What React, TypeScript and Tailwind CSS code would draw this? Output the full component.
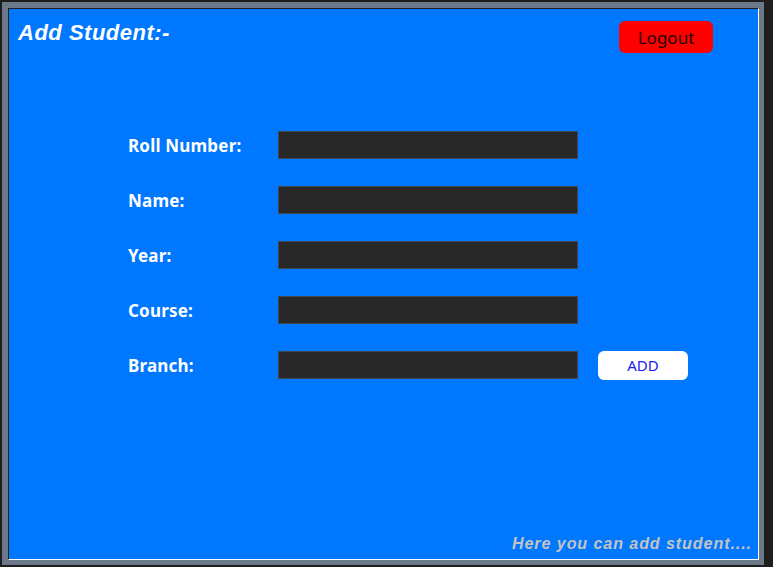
const fields = ["Roll Number:", "Name:", "Year:", "Course:", "Branch:"];

export default function App() {
  return (
    <div className="w-[773px] h-[567px] bg-[#1e1e1e] p-[2px]">
      <div className="w-[762px] h-[563px] bg-[#6b7989] pl-[6px] pt-[6px] pr-[5px] pb-[5px]">
        <div className="flex h-full flex-col border-t border-l border-t-[#202020] border-l-[#202020] border-r border-b border-r-white border-b-white bg-[#0077ff]">
          <div className="flex items-start justify-between">
            <h1
              className="ml-[9px] mt-[11px] text-[22px] leading-[26px] font-bold italic tracking-[0.5px] text-white"
              style={{ fontFamily: '"Liberation Sans", Arial, sans-serif' }}
            >
              Add Student:-
            </h1>
            <button
              className="mr-[45px] mt-[12px] h-[32px] w-[94px] rounded-[6px] bg-[#ff0000] pt-[1px] text-[17px] text-[#1a0000]"
              style={{ fontFamily: '"Noto Sans", sans-serif' }}
            >
              Logout
            </button>
          </div>

          <div className="mt-[78px] ml-[119px] flex flex-col gap-[27px]">
            {fields.map((label, i) => (
              <div key={label} className="flex h-[28px] items-center">
                <span
                  className="w-[150px] pt-[2px] text-[17px] font-bold tracking-[0.2px] text-white"
                  style={{ fontFamily: '"Noto Sans", sans-serif' }}
                >
                  {label}
                </span>
                <input
                  type="text"
                  className="h-[28px] w-[300px] border border-[#3e4650] bg-[#282828] outline-none"
                />
                {i === fields.length - 1 && (
                  <button
                    className="ml-[20px] h-[29px] w-[90px] rounded-[6px] bg-white text-[15px] text-[#2020ee]"
                    style={{ fontFamily: '"Noto Sans", sans-serif' }}
                  >
                    ADD
                  </button>
                )}
              </div>
            ))}
          </div>

          <p
            className="mt-auto mb-[6px] mr-[6px] text-right text-[16px] leading-[18px] font-bold italic tracking-[0.95px] text-[#c4c4c4]"
            style={{ fontFamily: '"Liberation Sans", Arial, sans-serif' }}
          >
            Here you can add student....
          </p>
        </div>
      </div>
    </div>
  );
}
